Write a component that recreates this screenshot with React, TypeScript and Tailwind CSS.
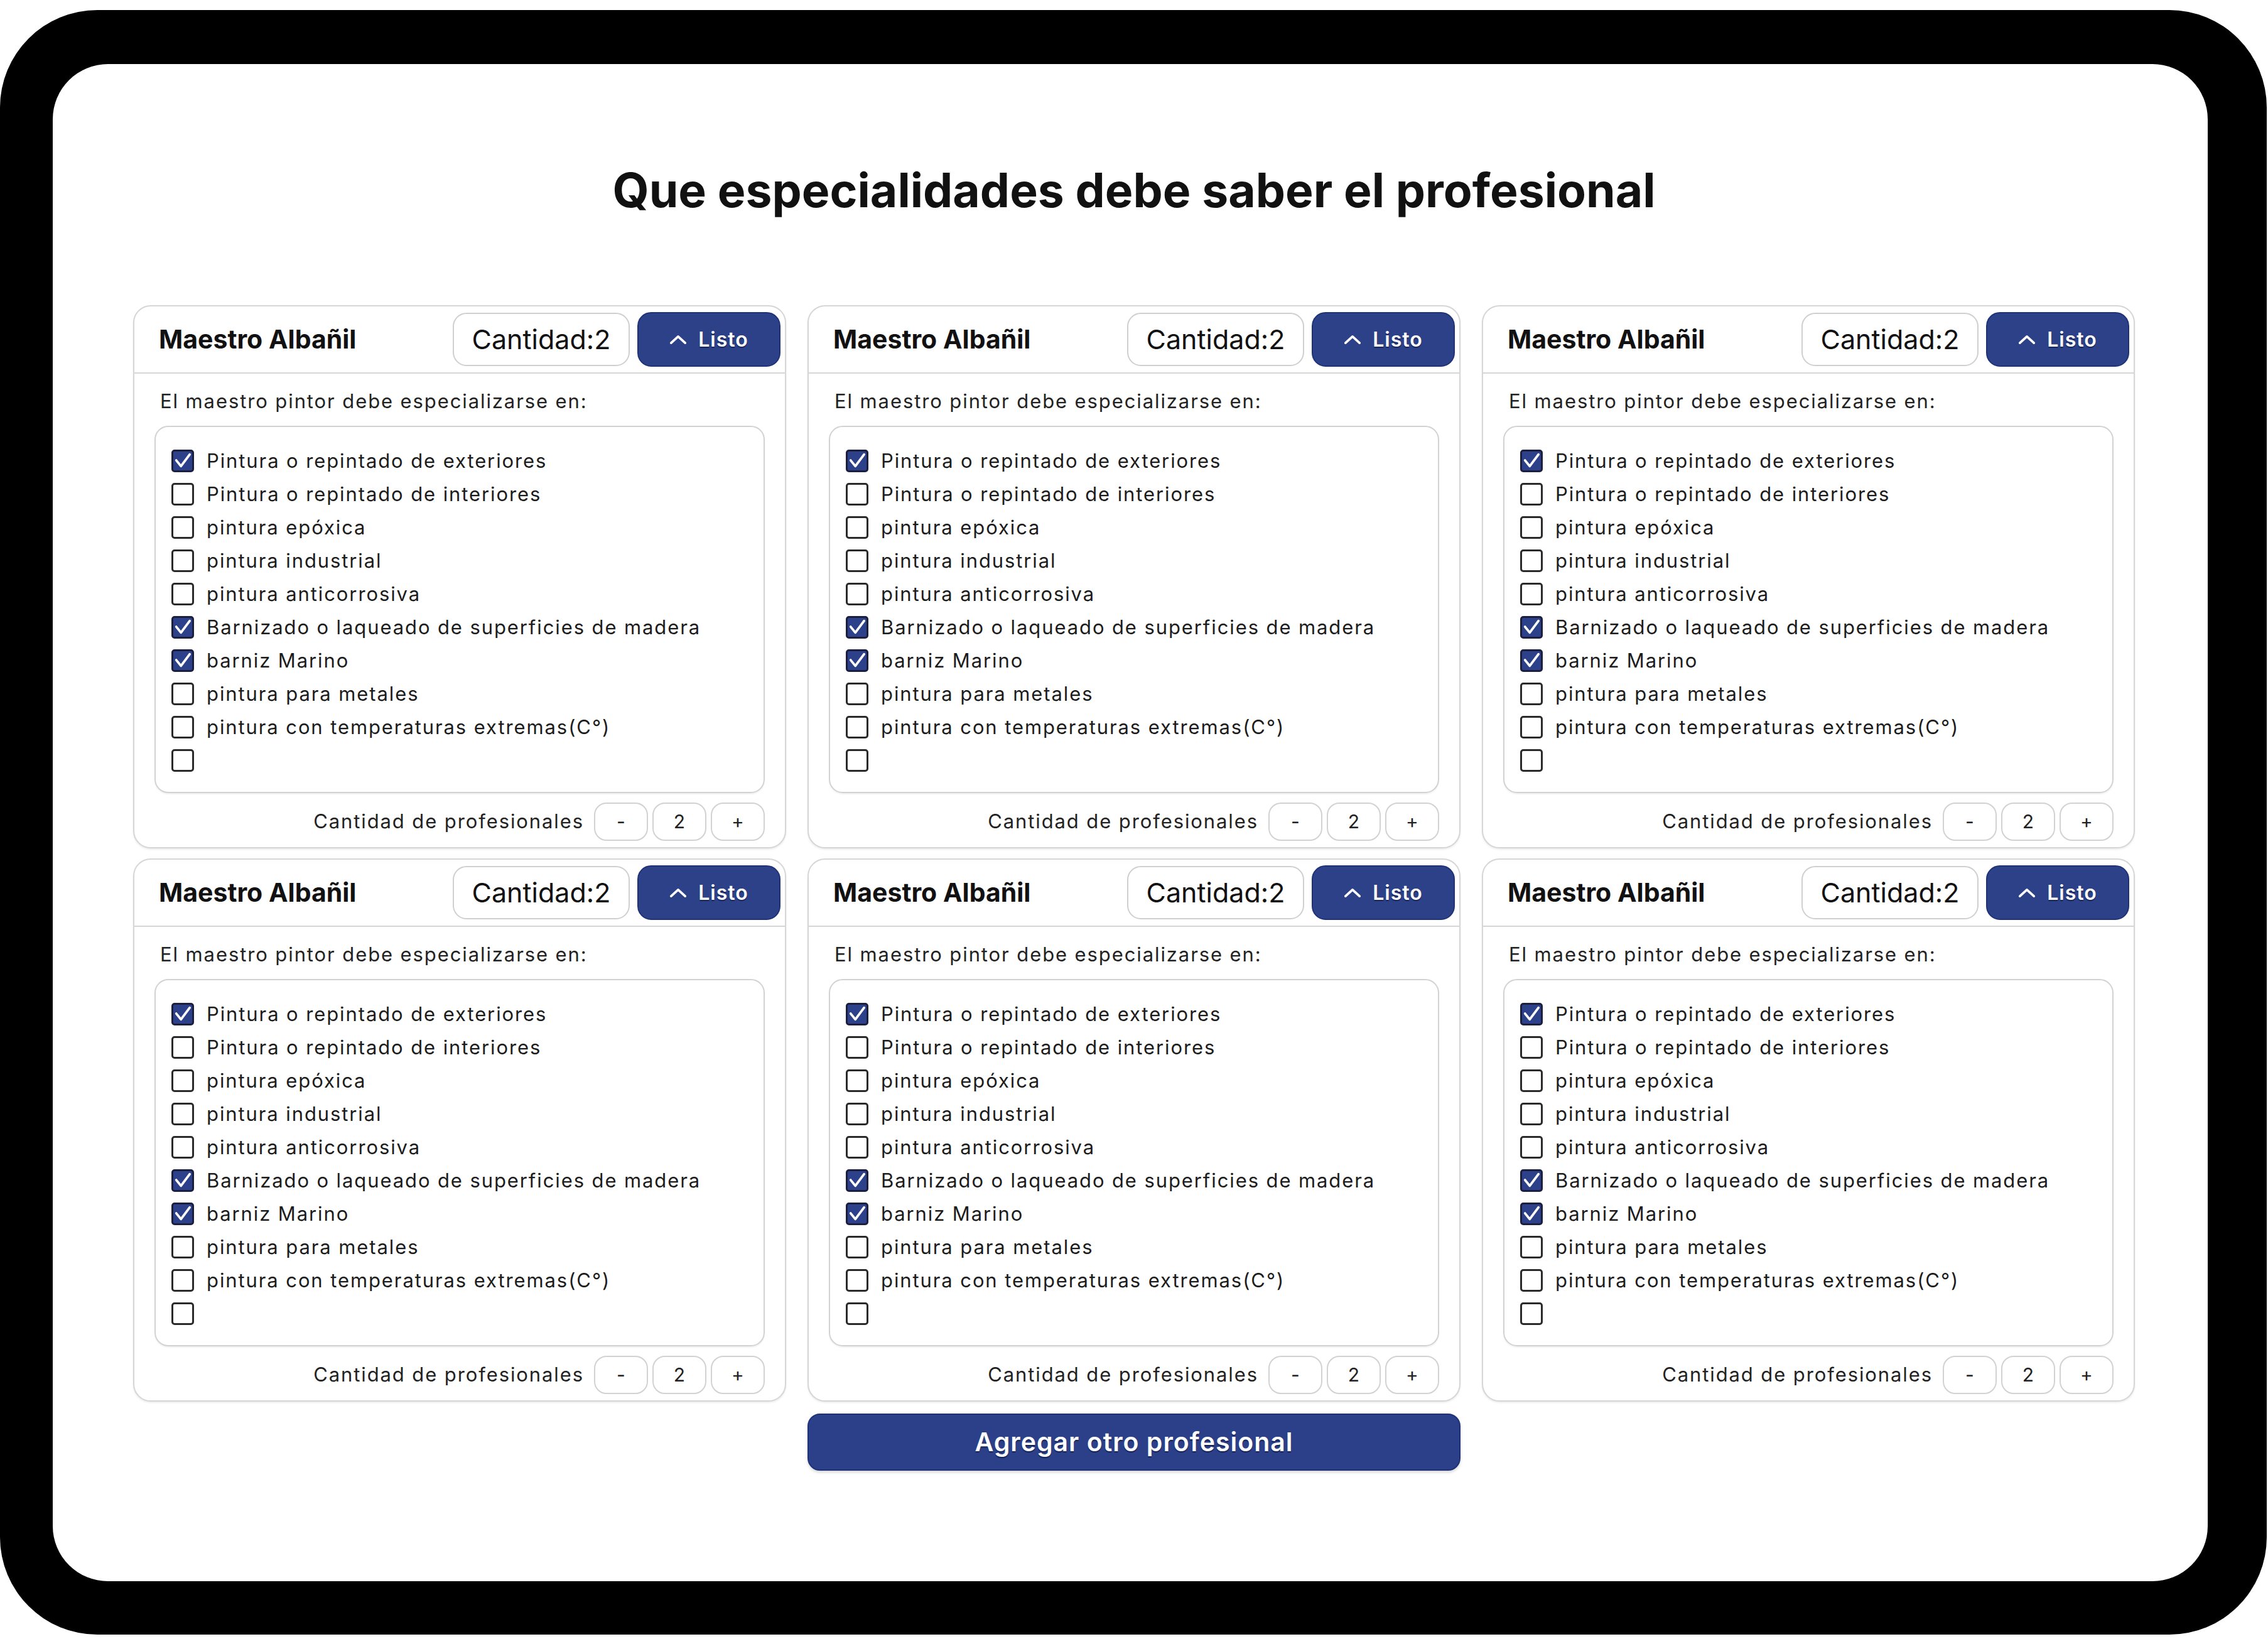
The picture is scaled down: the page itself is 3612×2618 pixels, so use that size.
import React from "react";

type Item = { label: string; checked: boolean };

const items: Item[] = [
  { label: "Pintura o repintado de exteriores", checked: true },
  { label: "Pintura o repintado de interiores", checked: false },
  { label: "pintura epóxica", checked: false },
  { label: "pintura industrial", checked: false },
  { label: "pintura anticorrosiva", checked: false },
  { label: "Barnizado o laqueado de superficies de madera", checked: true },
  { label: "barniz Marino", checked: true },
  { label: "pintura para metales", checked: false },
  { label: "pintura con temperaturas extremas(C°)", checked: false },
  { label: "", checked: false },
];

const CheckBox = ({ checked }: { checked: boolean }) =>
  checked ? (
    <span className="flex h-[36px] w-[36px] shrink-0 items-center justify-center rounded-[5px] border-[3px] border-[#1b1f3d] bg-[#2c4189]">
      <svg viewBox="0 0 30 30" className="h-[28px] w-[28px]">
        <path d="M4 14 L12 24 L27 4" fill="none" stroke="white" strokeWidth="4" strokeLinecap="round" strokeLinejoin="round" />
      </svg>
    </span>
  ) : (
    <span className="h-[36px] w-[36px] shrink-0 rounded-[5px] border-[3px] border-[#2a2a2a] bg-white" />
  );

const Card = () => (
  <div className="flex h-[865px] flex-col rounded-[28px] border-2 border-[#d6d6d6] bg-white shadow-[0_2px_3px_rgba(0,0,0,0.08)]">
    <div className="flex h-[107px] shrink-0 items-center border-b-2 border-[#d6d6d6] pl-[39px] pr-[7px]">
      <span className="text-[41px] font-bold text-[#111]">Maestro Albañil</span>
      <div className="ml-auto flex items-center gap-[12px]">
        <div className="flex h-[85px] w-[282px] items-center justify-center rounded-[22px] border-2 border-[#cfcfcf] text-[43px] text-[#111]">
          Cantidad:2
        </div>
        <button className="flex h-[87px] w-[228px] items-center justify-center gap-[18px] rounded-[22px] border-2 border-[#1f3277] bg-[#2c4187] text-[32px] font-semibold tracking-[1px] text-white [text-shadow:0_2px_1px_rgba(15,25,70,0.7)]">
          <svg viewBox="0 0 30 17" className="h-[16px] w-[28px]">
            <path d="M3 14 L15 3 L27 14" fill="none" stroke="white" strokeWidth="4" strokeLinecap="round" strokeLinejoin="round" />
          </svg>
          Listo
        </button>
      </div>
    </div>
    <div className="flex flex-1 flex-col px-[32px] pb-[10px] pt-[24px]">
      <p className="pl-[9px] text-[31px] leading-[40px] tracking-[1.9px] text-[#222]">
        El maestro pintor debe especializarse en:
      </p>
      <div className="mt-[19px] flex h-[585px] flex-col gap-[17px] rounded-[22px] border-2 border-[#d2d2d2] pl-[25px] pt-[36px] shadow-[0_2px_2px_rgba(0,0,0,0.06)]">
        {items.map((it, i) => (
          <label key={i} className="flex h-[36px] items-center gap-[20px] text-[31px] tracking-[1.9px] text-[#1c1c1c]">
            <CheckBox checked={it.checked} />
            <span>{it.label}</span>
          </label>
        ))}
      </div>
      <div className="mt-[15px] flex items-center justify-end">
        <span className="mr-[16px] text-[31px] tracking-[1.9px] text-[#222]">Cantidad de profesionales</span>
        <div className="flex gap-[7px]">
          {["-", "2", "+"].map((s) => (
            <div key={s} className="flex h-[61px] w-[86px] items-center justify-center rounded-[20px] border-2 border-[#d2d2d2] text-[30px] text-[#222]">
              {s}
            </div>
          ))}
        </div>
      </div>
    </div>
  </div>
);

export default function App() {
  return (
    <div className="h-[2618px] w-[3612px] bg-white pt-[16px] font-['Inter',sans-serif]">
      <div className="h-[2587px] w-[3610px] rounded-[155px] bg-black pb-[85px] pl-[84px] pr-[94px] pt-[86px]">
        <div className="h-full w-full rounded-[88px] bg-white pl-[128px] pt-[155px]">
          <div className="w-[3188px]">
            <h1 className="text-center text-[75px] font-bold leading-[92px] text-[#111]">
              Que especialidades debe saber el profesional
            </h1>
            <div className="mt-[137px] grid grid-cols-[repeat(3,1040px)] gap-x-[34px] gap-y-[16px]">
              {Array.from({ length: 6 }).map((_, i) => (
                <Card key={i} />
              ))}
              <button className="col-start-2 mt-[3px] h-[91px] rounded-[20px] border-2 border-[#1f3277] bg-[#2b4088] text-[41px] font-semibold tracking-[1px] text-white shadow-[0_3px_4px_rgba(0,0,0,0.15)] [text-shadow:0_2px_1px_rgba(15,25,70,0.8)]">
                Agregar otro profesional
              </button>
            </div>
          </div>
        </div>
      </div>
    </div>
  );
}
